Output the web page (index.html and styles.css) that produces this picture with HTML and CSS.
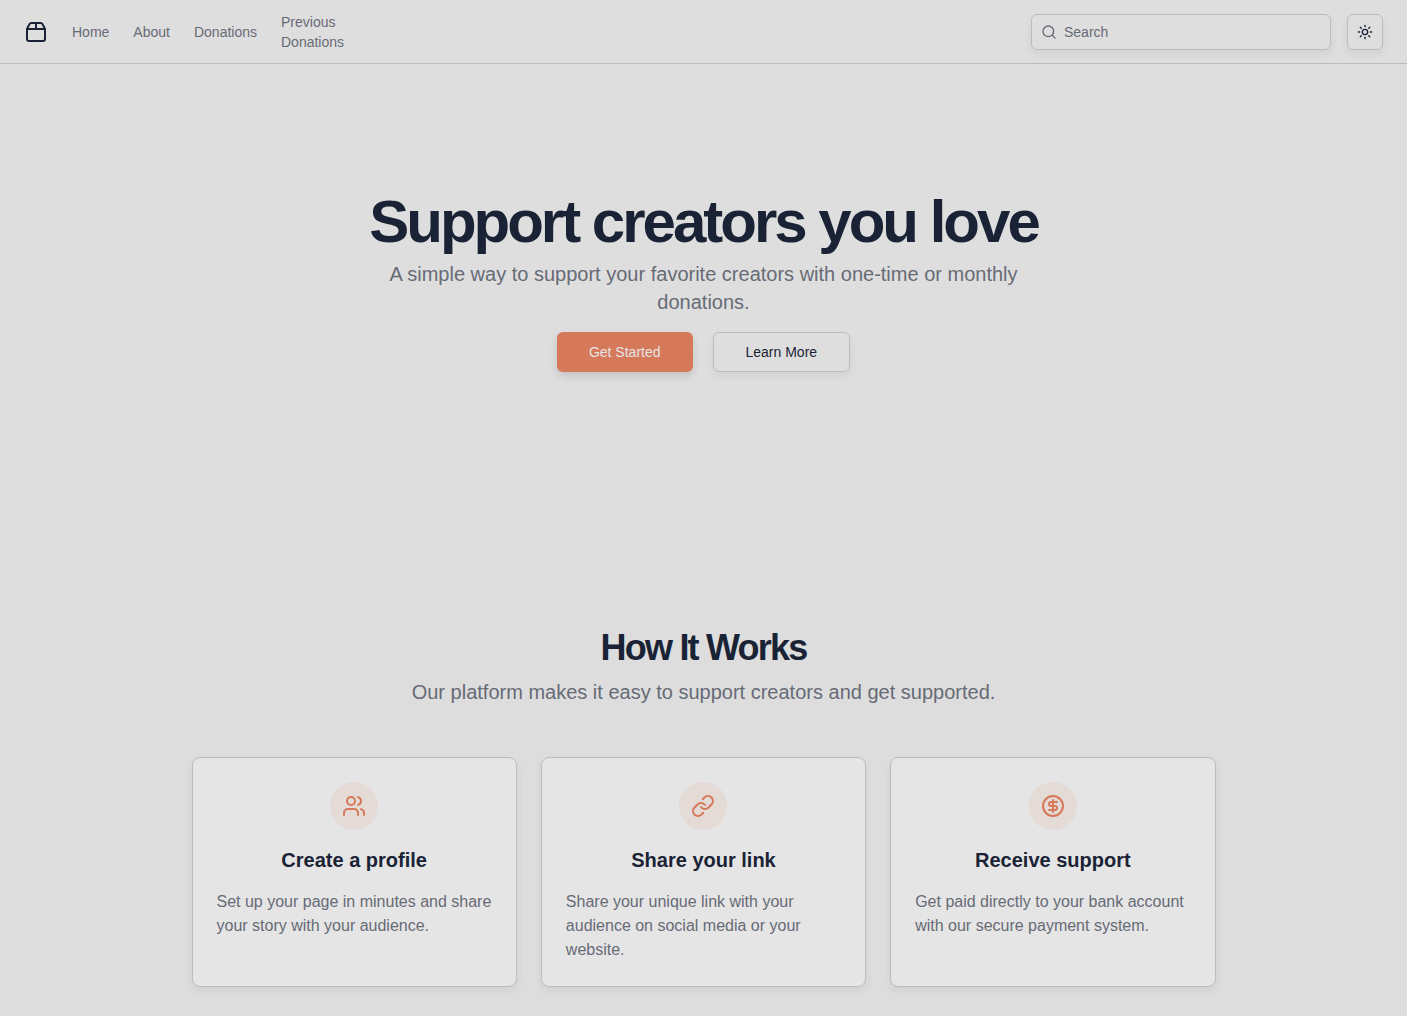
FILE: index.html
```html
<!DOCTYPE html>
<html lang="en">
<head>
    <meta charset="UTF-8">
    <meta name="viewport" content="width=device-width, initial-scale=1.0">
    <title>Support creators you love</title>
    <link rel="stylesheet" href="styles.css">
</head>
<body>
    <header class="header">
        <nav class="nav">
            <a class="logo" href="#" aria-label="Home page">
                <svg class="icon" viewBox="0 0 24 24">
                    <path d="M3 9h18v10a2 2 0 0 1-2 2H5a2 2 0 0 1-2-2V9Z"/>
                    <path d="m3 9 2.45-4.9A2 2 0 0 1 7.24 3h9.52a2 2 0 0 1 1.8 1.1L21 9"/>
                    <path d="M12 3v6"/>
                </svg>
            </a>
            <a class="nav-link" href="#">Home</a>
            <a class="nav-link" href="#">About</a>
            <a class="nav-link" href="#">Donations</a>
            <a class="nav-link nav-link-narrow" href="#">Previous Donations</a>
        </nav>
        <div class="header-actions">
            <form class="search">
                <svg class="icon icon-small" viewBox="0 0 24 24">
                    <circle cx="11" cy="11" r="8"/>
                    <path d="m21 21-4.3-4.3"/>
                </svg>
                <input type="search" placeholder="Search" aria-label="Search">
            </form>
            <button class="theme-toggle" type="button" aria-label="Toggle theme">
                <svg class="icon icon-small" viewBox="0 0 24 24">
                    <circle cx="12" cy="12" r="4"/>
                    <path d="M12 2v2"/>
                    <path d="M12 20v2"/>
                    <path d="m4.93 4.93 1.41 1.41"/>
                    <path d="m17.66 17.66 1.41 1.41"/>
                    <path d="M2 12h2"/>
                    <path d="M20 12h2"/>
                    <path d="m6.34 17.66-1.41 1.41"/>
                    <path d="m19.07 4.93-1.41 1.41"/>
                </svg>
            </button>
        </div>
    </header>

    <main>
        <section class="section hero">
            <h1>Support creators you love</h1>
            <p class="lead hero-lead">A simple way to support your favorite creators with one-time or monthly donations.</p>
            <div class="hero-buttons">
                <a class="btn btn-primary" href="#">Get Started</a>
                <a class="btn btn-outline" href="#">Learn More</a>
            </div>
        </section>

        <section class="section how">
            <h2>How It Works</h2>
            <p class="lead how-lead">Our platform makes it easy to support creators and get supported.</p>
            <div class="cards">
                <article class="card">
                    <div class="card-icon">
                        <svg class="icon" viewBox="0 0 24 24">
                            <path d="M16 21v-2a4 4 0 0 0-4-4H6a4 4 0 0 0-4 4v2"/>
                            <circle cx="9" cy="7" r="4"/>
                            <path d="M22 21v-2a4 4 0 0 0-3-3.87"/>
                            <path d="M16 3.13a4 4 0 0 1 0 7.75"/>
                        </svg>
                    </div>
                    <h3>Create a profile</h3>
                    <p>Set up your page in minutes and share your story with your audience.</p>
                </article>
                <article class="card">
                    <div class="card-icon">
                        <svg class="icon" viewBox="0 0 24 24">
                            <path d="M10 13a5 5 0 0 0 7.54.54l3-3a5 5 0 0 0-7.07-7.07l-1.72 1.71"/>
                            <path d="M14 11a5 5 0 0 0-7.54-.54l-3 3a5 5 0 0 0 7.07 7.07l1.71-1.71"/>
                        </svg>
                    </div>
                    <h3>Share your link</h3>
                    <p>Share your unique link with your audience on social media or your website.</p>
                </article>
                <article class="card">
                    <div class="card-icon">
                        <svg class="icon" viewBox="0 0 24 24">
                            <circle cx="12" cy="12" r="10"/>
                            <path d="M16 8h-6a2 2 0 1 0 0 4h4a2 2 0 1 1 0 4H8"/>
                            <path d="M12 18V6"/>
                        </svg>
                    </div>
                    <h3>Receive support</h3>
                    <p>Get paid directly to your bank account with our secure payment system.</p>
                </article>
            </div>
        </section>
    </main>
</body>
</html>
```

FILE: styles.css
```css
:root {
    --background: #dedede;
    --background-alt: #dddddd;
    --card: #e5e5e5;
    --text: #1a2336;
    --muted: #676b76;
    --border: #babbc4;
    --primary: #d6785a;
    --shadow: 0 4px 8px rgba(0, 0, 0, 0.06);
    --shadow-strong: 0 4px 8px rgba(0, 0, 0, 0.12);
}

* {
    margin: 0;
    padding: 0;
    box-sizing: border-box;
}

body {
    font-family: "Liberation Sans", Arial, sans-serif;
    font-size: 16px;
    line-height: 24px;
    color: var(--text);
    background: var(--background);
}

a {
    color: inherit;
    text-decoration: none;
}

.icon {
    display: block;
    width: 24px;
    height: 24px;
    fill: none;
    stroke: currentColor;
    stroke-width: 2;
    stroke-linecap: round;
    stroke-linejoin: round;
}

.icon-small {
    width: 16px;
    height: 16px;
}

/* Header */
.header {
    display: flex;
    align-items: center;
    justify-content: space-between;
    min-height: 64px;
    padding: 0 24px;
    border-bottom: 1px solid var(--border);
}

.nav {
    display: flex;
    align-items: center;
    gap: 24px;
}

.nav-link {
    font-size: 14px;
    line-height: 20px;
    color: var(--muted);
}

.nav-link:hover {
    color: var(--text);
}

.nav-link-narrow {
    max-width: 80px;
}

.header-actions {
    display: flex;
    align-items: center;
    gap: 16px;
}

.search {
    display: flex;
    align-items: center;
    gap: 7px;
    width: 300px;
    height: 36px;
    padding: 0 9px;
    border: 1px solid var(--border);
    border-radius: 6px;
    color: var(--muted);
    box-shadow: var(--shadow);
}

.search input {
    flex: 1;
    min-width: 0;
    border: none;
    outline: none;
    background: transparent;
    font: inherit;
    font-size: 14px;
    line-height: 20px;
    color: var(--text);
}

.search input::placeholder {
    color: var(--muted);
    opacity: 1;
}

.theme-toggle {
    display: flex;
    align-items: center;
    justify-content: center;
    width: 36px;
    height: 36px;
    border: 1px solid var(--border);
    border-radius: 6px;
    background: transparent;
    color: var(--text);
    cursor: pointer;
    box-shadow: var(--shadow);
}

/* Sections */
.section {
    display: flex;
    flex-direction: column;
    align-items: center;
    padding: 128px 24px;
}

.lead {
    font-size: 20px;
    color: var(--muted);
    text-align: center;
}

/* Hero */
.hero h1 {
    font-size: 60px;
    line-height: 60px;
    letter-spacing: -0.05em;
    text-align: center;
}

.hero-lead {
    max-width: 700px;
    margin: 8px 0 16px;
    line-height: 28px;
}

.hero-buttons {
    display: flex;
    gap: 20px;
}

.btn {
    display: flex;
    align-items: center;
    height: 40px;
    padding: 0 32px;
    border-radius: 6px;
    font-size: 14px;
    line-height: 20px;
    box-shadow: var(--shadow);
}

.btn-primary {
    background: var(--primary);
    color: #e5e5e5;
    box-shadow: var(--shadow-strong);
}

.btn-outline {
    border: 1px solid var(--border);
}

/* How it works */
.how {
    padding-bottom: 28px;
    background: var(--background-alt);
}

.how h2 {
    font-size: 36px;
    line-height: 40px;
    letter-spacing: -0.05em;
    text-align: center;
}

.how-lead {
    margin: 8px 0 48px;
    line-height: 33px;
}

.cards {
    display: grid;
    grid-template-columns: repeat(3, 1fr);
    gap: 24px;
    width: 100%;
    max-width: 1024px;
}

.card {
    display: flex;
    flex-direction: column;
    align-items: center;
    gap: 16px;
    padding: 24px;
    border: 1px solid var(--border);
    border-radius: 8px;
    background: var(--card);
    box-shadow: var(--shadow);
}

.card-icon {
    display: flex;
    align-items: center;
    justify-content: center;
    width: 48px;
    height: 48px;
    border-radius: 50%;
    background: #e4dad6;
    color: var(--primary);
}

.card h3 {
    font-size: 20px;
    line-height: 28px;
}

.card p {
    width: 100%;
    color: var(--muted);
}

@media (max-width: 768px) {
    .cards {
        grid-template-columns: 1fr;
    }

    .search {
        width: 160px;
    }
}
```
